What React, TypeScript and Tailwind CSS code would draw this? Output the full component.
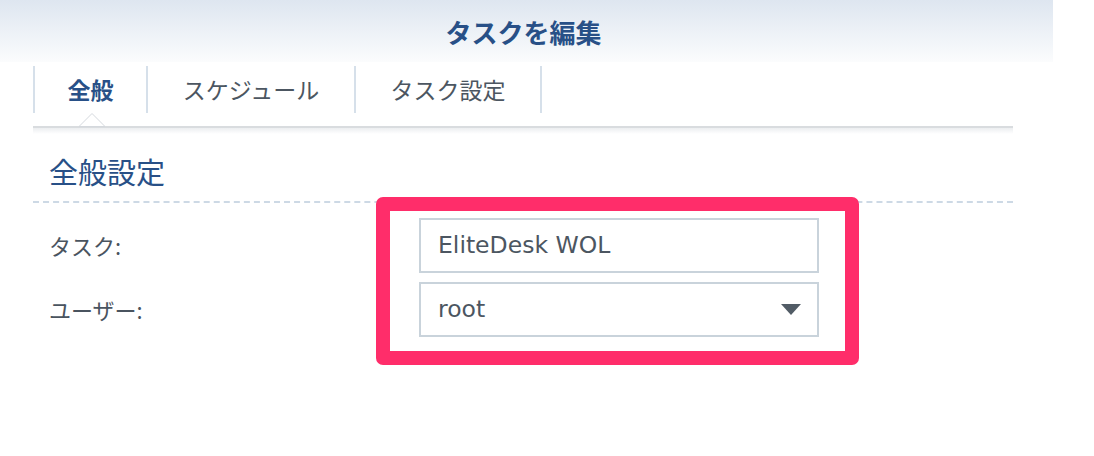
import React from "react";

const JP = { fontFamily: '"Noto Sans CJK JP", "Noto Sans", sans-serif' };
const LAT = { fontFamily: '"DejaVu Sans", "Noto Sans CJK JP", sans-serif' };

export default function App() {
  return (
    <div className="relative w-[1094px] h-[456px] bg-white overflow-hidden" style={JP}>
      {/* Header */}
      <div className="w-[1053px] h-[62px] bg-gradient-to-b from-[#dee6f0] to-[#fbfcfd] flex items-center justify-center">
        <span className="text-[26px] font-bold text-[#285087] leading-none mt-[2px] mr-[6px]">タスクを編集</span>
      </div>

      {/* Tabs */}
      <div className="ml-[33px] w-[980px] mt-[4px]">
        <div className="flex h-[47px]">
          <div className="w-[115px] border-l-2 border-r-2 border-[#d6e0ea] flex items-center justify-center text-[23px] font-bold text-[#285087]">
            全般
          </div>
          <div className="w-[208px] border-r-2 border-[#d6e0ea] flex items-center justify-center text-[23px] text-[#4c5661]">
            スケジュール
          </div>
          <div className="w-[186px] border-r-2 border-[#d6e0ea] flex items-center justify-center text-[23px] text-[#4c5661]">
            タスク設定
          </div>
        </div>
        <div className="relative h-[13px]">
          <svg className="absolute left-[46px] top-0" width="26" height="14" viewBox="0 0 26 14">
            <polygon points="0,13.5 13,0.5 26,13.5" fill="#ffffff" stroke="#d4d8dd" strokeWidth="1" />
          </svg>
        </div>
        <div className="h-[2px] bg-[#d9dcdf]" />
        <div className="h-[6px] bg-gradient-to-b from-[#eceef0] to-white" />
      </div>

      {/* Section */}
      <div className="ml-[33px] w-[980px]">
        <div className="pl-[16px] h-[60px] flex items-center mt-[7px]">
          <span className="text-[29px] text-[#285087] leading-none">全般設定</span>
        </div>
        <div className="border-t-2 border-dashed border-[#cdd9e5]" />
        <div className="pl-[16px] pt-[15px] flex flex-col gap-[9px]">
          <div className="flex items-center h-[55px]">
            <span className="w-[370px] text-[22px] text-[#4a545f]">タスク:</span>
            <div className="w-[400px] h-[55px] border-2 border-[#c9d3db] flex items-center pl-[17px] text-[23.5px] text-[#4c5661]" style={LAT}>
              EliteDesk WOL
            </div>
          </div>
          <div className="flex items-center h-[55px]">
            <span className="w-[370px] text-[22px] text-[#4a545f]">ユーザー:</span>
            <div className="w-[400px] h-[55px] border-2 border-[#c9d3db] flex items-center justify-between pl-[17px] pr-[16px] text-[23.5px] text-[#4c5661]" style={LAT}>
              <span>root</span>
              <svg width="20" height="11" viewBox="0 0 20 11">
                <polygon points="0,0 20,0 10,11" fill="#525c66" />
              </svg>
            </div>
          </div>
        </div>
      </div>

      {/* Highlight overlay */}
      <div className="absolute left-[376px] top-[197px] w-[483px] h-[168px] border-[14px] border-[#ff2d6a] rounded-[7px] pointer-events-none" />
    </div>
  );
}
